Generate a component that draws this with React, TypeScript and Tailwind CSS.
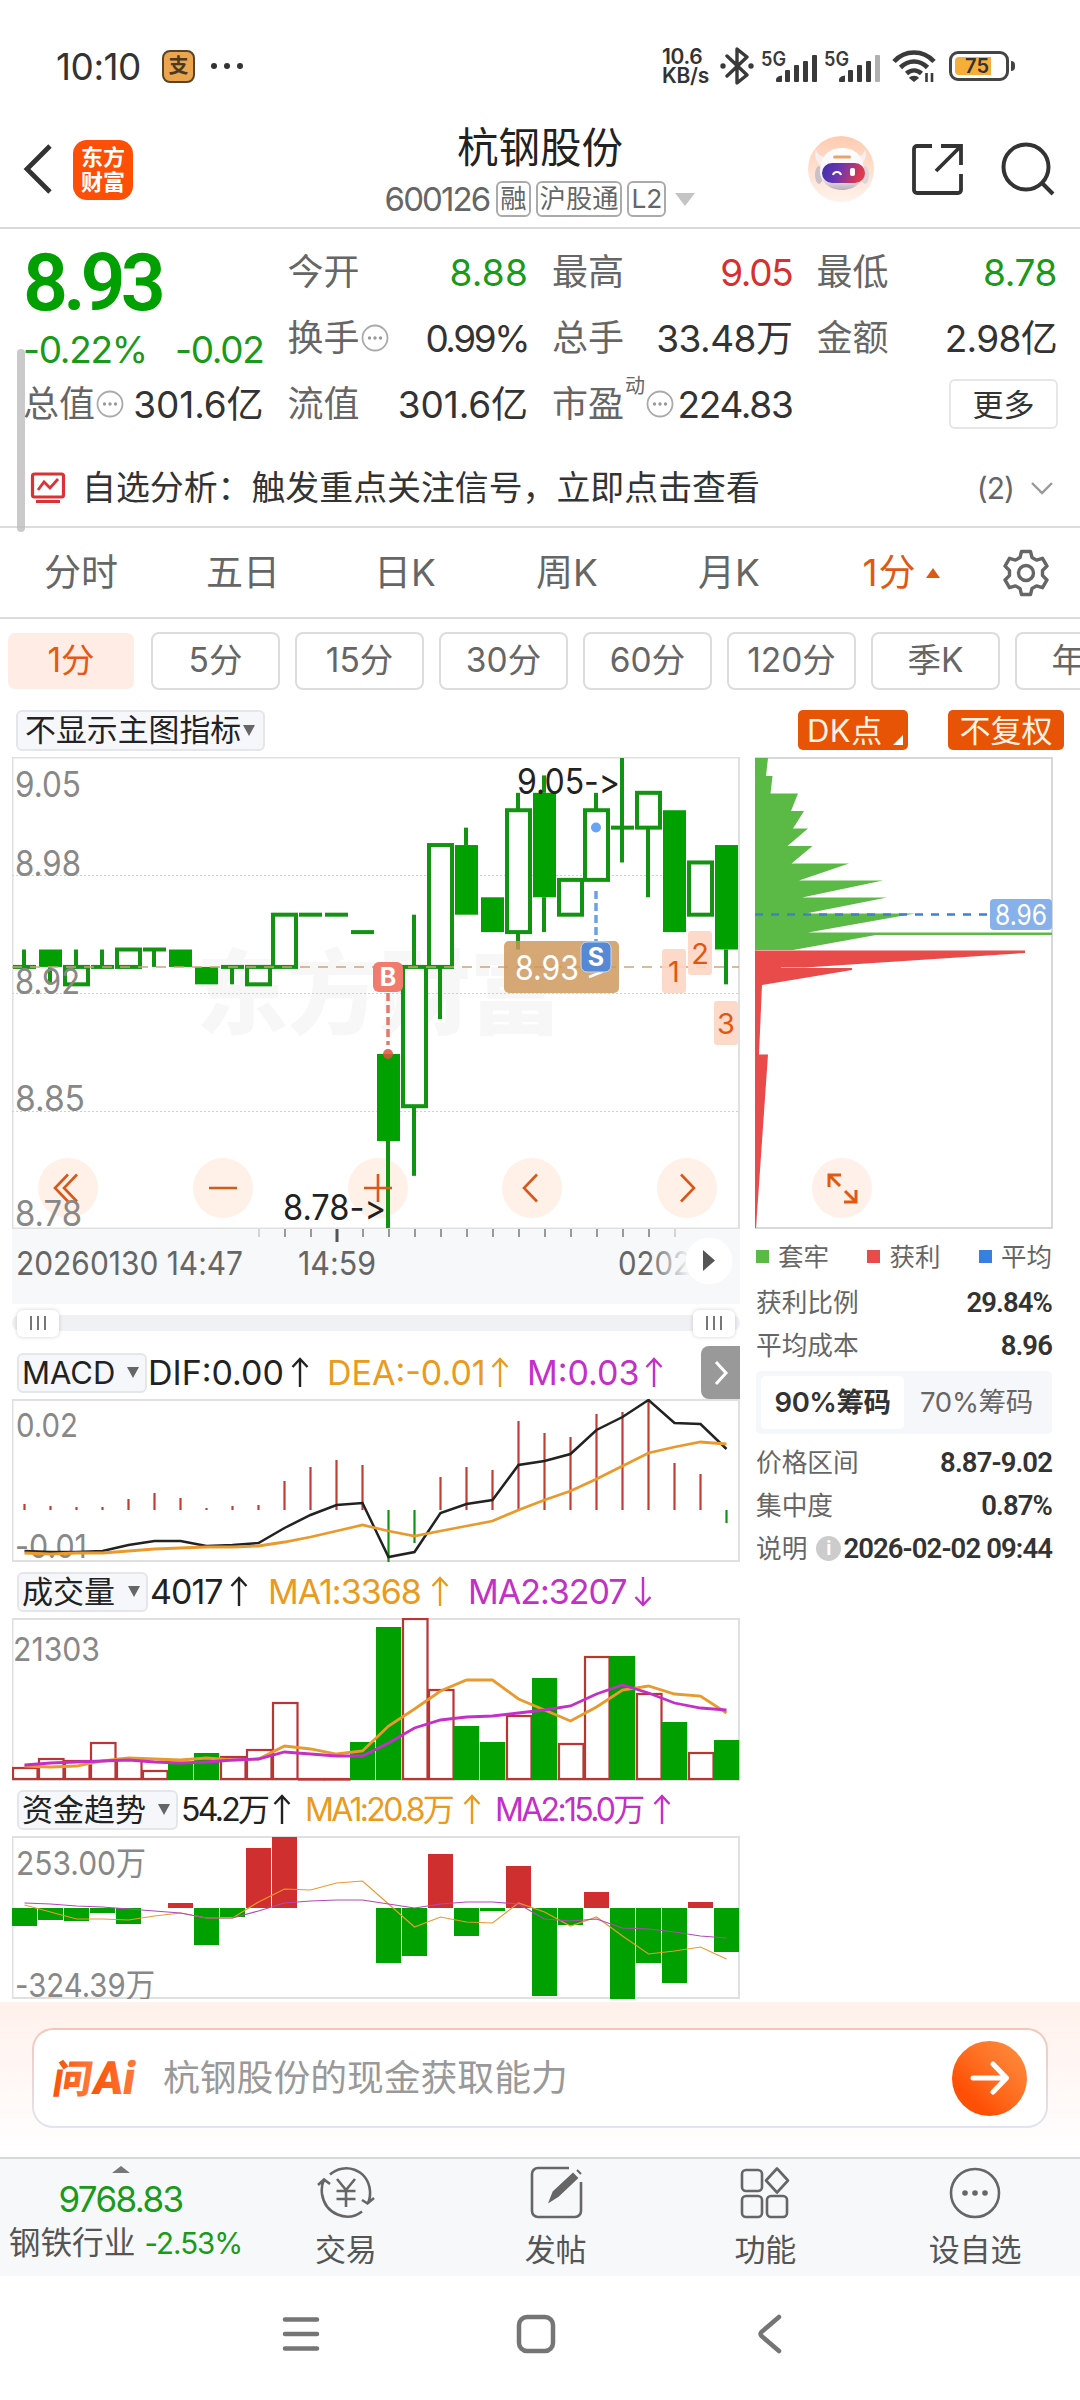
import { type ReactNode } from 'react'

const GREEN = '#00a000'
const RED = '#cf2f2f'
const ORANGE = '#ea9a2c'
const PURPLE = '#c42fc9'

const FONT = "font-['Inter','Noto_Sans_CJK_SC',sans-serif]"

/* ---------- data ---------- */

// [open, close, high, low]
const candles: [number, number, number, number][] = [
  [8.93, 8.93, 8.94, 8.93],
  [8.94, 8.93, 8.94, 8.92],
  [8.92, 8.93, 8.94, 8.92],
  [8.93, 8.93, 8.94, 8.93],
  [8.93, 8.94, 8.94, 8.93],
  [8.94, 8.94, 8.94, 8.93],
  [8.94, 8.93, 8.94, 8.93],
  [8.93, 8.92, 8.93, 8.92],
  [8.93, 8.93, 8.93, 8.92],
  [8.92, 8.93, 8.93, 8.92],
  [8.93, 8.96, 8.96, 8.93],
  [8.96, 8.96, 8.96, 8.96],
  [8.96, 8.96, 8.96, 8.96],
  [8.95, 8.95, 8.95, 8.95],
  [8.88, 8.83, 8.88, 8.78],
  [8.85, 8.93, 8.96, 8.81],
  [8.93, 9.0, 9.0, 8.9],
  [9.0, 8.96, 9.01, 8.96],
  [8.97, 8.95, 8.97, 8.95],
  [8.95, 9.02, 9.03, 8.94],
  [9.03, 8.97, 9.04, 8.95],
  [8.96, 8.98, 8.98, 8.96],
  [8.98, 9.02, 9.03, 8.98],
  [9.01, 9.01, 9.05, 8.99],
  [9.01, 9.03, 9.03, 8.97],
  [9.02, 8.95, 9.02, 8.95],
  [8.96, 8.99, 8.99, 8.96],
  [9.0, 8.94, 9.0, 8.92],
]

const macdBars = [
  6, 4, 3, 3, 11, 17, 12, 2, 4, 5, 29, 43, 50, 45, -52, -33, 33, 43, 40, 89, 77, 73, 96, 98, 109, 47, 36, -13,
]
const dif = [
  151, 152, 152, 151, 145, 141, 141, 146, 145, 143, 128, 115, 105, 103, 157, 152, 113, 104, 100, 65, 61, 54, 30, 17,
  0, 23, 24, 49,
]
const dea = [
  153, 154, 153, 153, 151, 149, 148, 147, 147, 146, 142, 137, 131, 125, 131, 136, 131, 126, 121, 110, 100, 91, 79,
  66, 53, 47, 42, 44,
]

// bar top measured from the top of the pane, negative = falling minute
const volBars = [
  150, 141, 143, 125, 141, 153, -146, -135, 139, 132, 85, 0, 0, -124, -9, 1, 72, -108, -124, 98, -60, 126, 39, -38,
  76, -104, 135, -122,
]
const volMa1 = [
  148, 149, 148, 143, 140, 141, 142, 140, 142, 141, 128, 131, 136, 133, 108, 91, 73, 62, 62, 81, 92, 103, 89, 72,
  68, 76, 78, 95,
]
const volMa2 = [
  147, 145, 144, 143, 142, 144, 145, 144, 142, 141, 134, 136, 138, 138, 125, 110, 102, 99, 98, 95, 92, 88, 76, 67,
  75, 85, 90, 92,
]

const fundBars = [
  -18, -12, -13, -5, -16, 0, 5, -37, -9, 60, 71, 0, 0, 0, -55, -48, 54, -28, -3, 42, -88, -17, 16, -91, -55, -75, 6,
  -44,
]
const fundMa1 = [
  69, 76, 83, 83, 84, 80, 77, 82, 82, 66, 53, 54, 47, 45, 68, 91, 81, 86, 87, 67, 76, 90, 81, 100, 118, 115, 111,
  123,
]
const fundMa2 = [
  67, 68, 70, 71, 73, 75, 77, 82, 82, 75, 67, 65, 64, 64, 68, 72, 68, 66, 66, 68, 83, 85, 83, 92, 93, 96, 100, 102,
]

/* ---------- small helpers ---------- */

const cx = (i: number) => 12.5 + i * 26
const toPoints = (ys: number[]) => ys.map((y, i) => `${cx(i)},${y}`).join(' ')

function More({ className = '' }: { className?: string }) {
  return (
    <svg className={className} width="28" height="28" viewBox="0 0 28 28">
      <circle cx="14" cy="14" r="12.5" fill="none" stroke="#aaa" strokeWidth="1.8" />
      <g fill="#999">
        <circle cx="8.5" cy="14" r="1.7" />
        <circle cx="14" cy="14" r="1.7" />
        <circle cx="19.5" cy="14" r="1.7" />
      </g>
    </svg>
  )
}

function Arrow({ down = false }: { down?: boolean }) {
  return (
    <svg
      className={down ? 'shrink-0 rotate-180' : 'shrink-0'}
      width="18"
      height="31"
      viewBox="0 0 18 31"
      fill="none"
      stroke="currentColor"
      strokeWidth="2.4"
    >
      <path d="M9 30V2M1.500 10L9 2l7.500 8" />
    </svg>
  )
}

type LabelProps = { x: number; y: number; w?: number; size?: number; fill?: string; children: string }

function Label({ x, y, w, size = 35, fill = '#888', children }: LabelProps) {
  return (
    <text
      x={x}
      y={y}
      fontSize={size}
      fill={fill}
      textLength={w}
      lengthAdjust="spacingAndGlyphs"
      className="[font-feature-settings:'calt'_0]"
    >
      {children}
    </text>
  )
}

/* ---------- status bar ---------- */

function Signal({ dim = false }: { dim?: boolean }) {
  return (
    <svg className="overflow-visible" width="60" height="34" viewBox="0 0 60 34" fill="#3a3a3a">
      <text x="0" y="17" fontSize="20" fontWeight="600" textLength="25" lengthAdjust="spacingAndGlyphs">
        5G
      </text>
      <path d="M15 31c0-3 3-4 6-4.500V32a1 1 0 0 1-1 1h-4a1 1 0 0 1-1-1z" />
      <rect x="24" y="21" width="5" height="12" rx="1" />
      <rect x="33" y="16" width="5" height="17" rx="1" />
      <rect x="42" y="12" width="5" height="21" rx="1" />
      <rect x="51" y="6" width="5" height="27" rx="1" fill={dim ? '#b0b0b0' : '#3a3a3a'} />
    </svg>
  )
}

function StatusBar() {
  return (
    <div className="flex h-[132px] items-center pl-[56px] pr-[65px] text-[#333]">
      <span className="w-[87px] text-[37px] leading-none tracking-[-0.500px]">10:10</span>
      <div className="ml-[19px] flex h-[33px] w-[33px] items-center justify-center rounded-[8px] border-2 border-[#5a4326] bg-[#eaa54e] text-[20px] font-bold leading-none text-[#4a3a22]">
        支
      </div>
      <div className="ml-[16px] flex gap-[7px]">
        <i className="h-[6px] w-[6px] rounded-full bg-[#333]" />
        <i className="h-[6px] w-[6px] rounded-full bg-[#333]" />
        <i className="h-[6px] w-[6px] rounded-full bg-[#333]" />
      </div>
      <div className="ml-auto flex items-center">
        <div className="w-[58px] whitespace-nowrap text-[21px] font-semibold leading-[19px] tracking-[-0.300px]">
          <div>10.6</div>
          <div>KB/s</div>
        </div>
        <svg className="mr-[7px]" width="34" height="38" viewBox="0 0 34 38" fill="none" stroke="#3a3a3a" strokeWidth="3.400">
          <path d="M7 9l20 19-10 8V2l10 8L7 29" strokeLinejoin="round" strokeLinecap="round" />
          <circle cx="3" cy="19" r="2.700" fill="#3a3a3a" stroke="none" />
          <circle cx="31" cy="19" r="2.700" fill="#3a3a3a" stroke="none" />
        </svg>
        <Signal />
        <span className="w-[3px]" />
        <Signal dim />
        <svg className="ml-[8px]" width="44" height="36" viewBox="0 0 44 36" fill="none" stroke="#3a3a3a" strokeWidth="4.600">
          <path d="M2 13.500C13 1.500 31 1.500 42 13.500" />
          <path d="M8.500 19.500c8-8 19-8 27 0" />
          <path d="M14.500 25.500c4.500-4 10.500-4 15 0" />
          <path d="M17 30c2-3 8-3 10 0L22 34z" fill="#3a3a3a" stroke="none" />
          <path d="M34.500 34v-9M40 25v9" strokeWidth="2.600" />
        </svg>
        <div className="ml-[13px] flex h-[30px] w-[60px] items-center rounded-[9px] border-[3.500px] border-[#444] p-[3px]">
          <div className="flex h-full w-[36px] items-center justify-center rounded-l-[4px] bg-[#f5ae38] pl-[8px] text-[20px] font-semibold leading-none">
            75
          </div>
        </div>
        <i className="ml-[2px] h-[10px] w-[4px] rounded-r bg-[#444]" />
      </div>
    </div>
  )
}

/* ---------- header ---------- */

function Robot() {
  return (
    <svg width="66" height="66" viewBox="0 0 66 66">
      <defs>
        <linearGradient id="halo" x1="0" y1="0" x2="0" y2="1">
          <stop offset="0" stopColor="#ffcbb0" />
          <stop offset="1" stopColor="#fff3ed" />
        </linearGradient>
        <linearGradient id="shell" x1="0" y1="0" x2="0" y2="1">
          <stop offset="0" stopColor="#fff" />
          <stop offset="0.700" stopColor="#f3f0f4" />
          <stop offset="1" stopColor="#b9aeb6" />
        </linearGradient>
        <linearGradient id="visor" x1="0" y1="0" x2="1" y2="0.200">
          <stop offset="0" stopColor="#3a2fa6" />
          <stop offset="0.450" stopColor="#6a35b4" />
          <stop offset="1" stopColor="#e23a48" />
        </linearGradient>
      </defs>
      <circle cx="33" cy="33" r="33" fill="url(#halo)" />
      <path d="M8 13c1 6 5 8 10 8l-6 8c-5-5-6-11-4-16zM57 13c-1 6-5 8-10 8l6 8c5-5 6-11 4-16z" fill="#f6eff0" />
      <ellipse cx="11" cy="39" rx="4" ry="9" fill="#c9c0c8" />
      <ellipse cx="57" cy="39" rx="4" ry="9" fill="#ddd5da" />
      <path d="M12 36c0-16 9-24 22-24s22 8 22 24c0 9-9 18-22 18S12 45 12 36z" fill="url(#shell)" />
      <rect x="25" y="19.500" width="18" height="3" rx="1.500" fill="#e8a36c" />
      <rect x="14" y="27" width="43" height="20" rx="10" fill="url(#visor)" />
      <path d="M25 39c1-4 7-4 8 0" fill="none" stroke="#fff" strokeWidth="2" />
      <rect x="42" y="32" width="5" height="8" rx="2" fill="#fff" />
    </svg>
  )
}

function Tag({ children }: { children: ReactNode }) {
  return (
    <span className="flex h-[36px] items-center rounded-[6px] border-2 border-[#aaa] px-[2px] text-[26.300px] leading-none">
      {children}
    </span>
  )
}

function Header() {
  return (
    <div className="flex h-[97px] items-start border-b-2 border-[#d8d8d8] pl-[22px] pr-[25px]">
      <svg className="mt-[11px]" width="32" height="52" viewBox="0 0 32 52" fill="none" stroke="#333" strokeWidth="4.800">
        <path d="M28 3L5 26l23 23" />
      </svg>
      <div className="ml-[19px] mt-[8px] flex h-[60px] w-[60px] flex-col items-center justify-center rounded-[14px] bg-[#fd4f05] text-[22px] font-bold leading-[25px] text-white">
        <div>东方</div>
        <div>财富</div>
      </div>
      <div className="ml-[200px] flex w-[414px] flex-col items-center text-[#666]">
        <div className="-mt-[5px] text-[41.500px] leading-[42px] text-[#222]">杭钢股份</div>
        <div className="mt-[12px] flex items-center gap-[5px]">
          <span className="mr-[2px] text-[33px] leading-none tracking-[-1.900px]">600126</span>
          <Tag>融</Tag>
          <Tag>沪股通</Tag>
          <Tag>L2</Tag>
          <i className="ml-[4px] border-x-[10px] border-t-[13px] border-x-transparent border-t-[#c4c4c4]" />
        </div>
      </div>
      <div className="ml-auto mt-[4px] flex items-center">
        <Robot />
        <svg className="ml-[37px]" width="52" height="52" viewBox="0 0 52 52" fill="none" stroke="#333" strokeWidth="3.800">
          <path d="M21 3H6a3 3 0 0 0-3 3v41a3 3 0 0 0 3 3h41a3 3 0 0 0 3-3V31M30 3h20v19M50 3L25 28" />
        </svg>
        <svg className="ml-[38px]" width="54" height="54" viewBox="0 0 54 54" fill="none" stroke="#333" strokeWidth="4">
          <circle cx="25" cy="25" r="22.500" />
          <path d="M41 41l11 11" />
        </svg>
      </div>
    </div>
  )
}

/* ---------- quote ---------- */

type CellProps = { name: string; value: string; tone?: string; track?: string; more?: boolean; sup?: string }

function Cell({ name, value, tone = 'text-[#333]', track = 'tracking-[-1.300px]', more, sup }: CellProps) {
  return (
    <div className="flex h-[66px] items-center">
      <span className="text-[36px] text-[#666]">{name}</span>
      {sup && <sup className="top-0 -mt-[36px] ml-[1px] text-[20px] text-[#666]">{sup}</sup>}
      {more && <More className="ml-[1px] shrink-0" />}
      <span className={`ml-auto whitespace-nowrap text-[37px] ${track} ${tone}`}>{value}</span>
    </div>
  )
}

function Quote() {
  return (
    <div className="relative h-[299px] border-b-2 border-[#dcdcdc] pt-[10px]">
      <div className="absolute left-[17px] top-[120px] z-10 h-[183px] w-[8px] rounded-full bg-[#bdbdbd]/80" />
      <div className="grid grid-cols-4 gap-x-6 px-[23px] leading-none">
        <div className="row-span-2 text-[#1a9a1a]">
          <div className="pt-[4px] font-['Roboto'] text-[79px] font-semibold leading-[80px] tracking-[-5px] text-[#00a000]">
            8.93
          </div>
          <div className="mt-[8px] flex justify-between text-[37px] tracking-[-1.300px]">
            <span>-0.22%</span>
            <span>-0.02</span>
          </div>
        </div>
        <Cell name="今开" value="8.88" tone="text-[#1a9a1a]" track="tracking-[0.200px]" />
        <Cell name="最高" value="9.05" tone="text-[#d83030]" />
        <Cell name="最低" value="8.78" tone="text-[#1a9a1a]" track="tracking-[-0.400px]" />
        <Cell name="换手" value="0.99%" more track="tracking-[-2.500px]" />
        <Cell name="总手" value="33.48万" track="tracking-[-0.500px]" />
        <Cell name="金额" value="2.98亿" track="tracking-[-0.700px]" />
        <Cell name="总值" value="301.6亿" more track="tracking-[-0.100px]" />
        <Cell name="流值" value="301.6亿" track="tracking-[-0.100px]" />
        <Cell name="市盈" value="224.83" more sup="动" />
        <div className="-mr-[1px] flex h-[66px] items-center justify-end">
          <div className="flex h-[50px] w-[109px] items-center justify-center rounded-[6px] border-2 border-[#e6e6e6] text-[31px] text-[#333]">
            更多
          </div>
        </div>
      </div>
      <div className="flex h-[90px] items-center pl-[30px] pr-[26px] pt-[11px] leading-none">
        <svg width="37" height="32" viewBox="0 0 37 32" fill="none" stroke="#dc3237" strokeWidth="3.200">
          <rect x="2.500" y="2" width="31" height="23" rx="2" />
          <path d="M8 18l6-8 6 6 8-9" strokeWidth="2.800" />
          <path d="M6 29.500h24" strokeWidth="3" />
        </svg>
        <span className="ml-[15px] text-[33.900px] text-[#333]">自选分析：触发重点关注信号，立即点击查看</span>
        <span className="ml-auto text-[30px] tracking-[-1px] text-[#666]">(2)</span>
        <svg className="ml-[16px]" width="24" height="14" viewBox="0 0 24 14" fill="none" stroke="#999" strokeWidth="2.400">
          <path d="M2 2l10 10L22 2" />
        </svg>
      </div>
    </div>
  )
}

/* ---------- tabs ---------- */

function Tabs() {
  return (
    <div className="flex h-[91px] items-center border-b-2 border-[#dcdcdc] text-[37px] leading-none text-[#666]">
      {['分时', '五日', '日K', '周K', '月K'].map((t) => (
        <div key={t} className="w-[162px] text-center">
          {t}
        </div>
      ))}
      <div className="flex w-[162px] items-center justify-center gap-[9px] pl-[20px] text-[#de5a14]">
        <span className="tracking-[1px]">1分</span>
        <i className="border-x-[7px] border-b-[10px] border-x-transparent border-b-[#de5a14]" />
      </div>
      <svg className="ml-[30px]" width="48" height="48" viewBox="0 0 48 48" fill="none" stroke="#666" strokeWidth="3.400" strokeLinejoin="round">
        <path d="M19.500 2.500h9l1.500 6 4.500 2.600 6-1.800 4.500 7.800-4.500 4.300v5.200l4.500 4.300-4.500 7.800-6-1.800-4.500 2.600-1.500 6h-9l-1.500-6-4.500-2.600-6 1.800L3 30.900l4.500-4.300v-5.200L3 17.100l4.500-7.800 6 1.800L18 8.500z" />
        <circle cx="24" cy="24" r="7.500" />
      </svg>
    </div>
  )
}

function Periods() {
  return (
    <div className="flex h-[78px] items-center overflow-hidden pl-[8px] pt-[6px] text-[33.500px] leading-none text-[#666]">
      <div className="mr-[17px] flex h-[56px] w-[126px] shrink-0 items-center justify-center rounded-[7px] bg-[#ffece4] text-[#e25a14]">
        1分
      </div>
      {['5分', '15分', '30分', '60分', '120分', '季K', '年K'].map((t) => (
        <div
          key={t}
          className="mr-[15px] flex h-[58px] w-[129px] shrink-0 items-center justify-center rounded-[8px] border-2 border-[#dcdcdc]"
        >
          {t}
        </div>
      ))}
    </div>
  )
}

function ChartTools() {
  return (
    <div className="flex h-[60px] items-center pl-[16px] pr-[16px] pt-[6px] leading-none">
      <div className="flex h-[41px] w-[249px] items-center rounded-[6px] border-2 border-[#e4e6ea] bg-[#f6f7fa] pl-[7px] text-[30.900px] text-[#222]">
        不显示主图指标
        <i className="ml-[2px] border-x-[6px] border-t-[11px] border-x-transparent border-t-[#666]" />
      </div>
      <div className="relative ml-auto flex h-[40px] w-[110px] items-center rounded-[5px] bg-[#e85405] pl-[9px] text-[31px] tracking-[0.500px] text-[#fff3e4]">
        DK点
        <i className="absolute bottom-[5px] right-[5px] border-b-[10px] border-l-[10px] border-b-white border-l-transparent" />
      </div>
      <div className="ml-[40px] flex h-[40px] w-[116px] items-center justify-center rounded-[5px] bg-[#e85405] text-[31px] text-[#fff3e4]">
        不复权
      </div>
    </div>
  )
}

/* ---------- candle chart ---------- */

const py = (p: number) => 1 + (9.05 - p) * 1741

function CandleChart() {
  return (
    <svg className="block" width="728" height="472" viewBox="0 0 728 472">
      <rect x="0.500" y="0.500" width="726.500" height="471" fill="#fff" stroke="#e0e0e0" strokeWidth="2" />
      <g className="font-['Noto_Sans_CJK_SC']" fontWeight="900" fill="#f7f7f7">
        <text x="184" y="270" fontSize="92" textLength="366">
          东方财富
        </text>
      </g>
      <g stroke="#d0d0d0" strokeDasharray="2 2">
        <path d="M0 118.500H727M0 236.500H727M0 354.500H727" />
      </g>
      {candles.map(([o, c, h, l], i) => {
        const x = 12 + i * 26
        const top = py(Math.max(o, c))
        const bottom = py(Math.min(o, c))
        return (
          <g key={i} stroke="#129312" strokeWidth="4">
            {h > Math.max(o, c) && <path d={`M${x} ${py(h)}V${top}`} />}
            {l < Math.min(o, c) && <path d={`M${x} ${bottom}V${py(l)}`} />}
            {o === c && <path d={`M${x - 11} ${top}h23`} />}
            {c > o && <rect x={x - 11} y={top} width="23" height={bottom - top} fill="#fff" />}
            {c < o && <rect x={x - 11} y={top} width="23" height={bottom - top} fill={GREEN} stroke="none" />}
          </g>
        )
      })}
      <path d="M0 210H727" stroke="#d0a47a" strokeWidth="1.500" strokeDasharray="10 8" />

      {/* zoom / pan buttons */}
      <g fill="#ffe4d6" fillOpacity="0.550">
        {[56, 211, 366, 520, 675].map((x) => (
          <circle key={x} cx={x} cy="431" r="30" />
        ))}
      </g>
      <path d="M376 384.500V471" stroke="#129312" strokeWidth="4" />
      <g fill="none" stroke="#d8581a" strokeWidth="2.600">
        <path d="M56 417.500L43 431l13 13.500M65 417.500L52 431l13 13.500" />
        <path d="M197 431h28M352 431h28M366 417v28" />
        <path d="M525 417.500L512 431l13 13.500M669 417.500L682 431l-13 13.500" />
      </g>

      <Label x={3} y={39.500} w={66}>9.05</Label>
      <Label x={3} y={119} w={66}>8.98</Label>
      <Label x={3} y={237} w={65}>8.92</Label>
      <Label x={3} y={354} w={70}>8.85</Label>
      <Label x={3} y={469} w={67}>8.78</Label>
      <Label x={505} y={37} w={103} fill="#222">9.05-&gt;</Label>
      <Label x={271} y={463} w={103} fill="#222">8.78-&gt;</Label>

      {/* buy marker */}
      <path d="M376 236v52" stroke="#e5786c" strokeWidth="3.500" strokeDasharray="8 4" />
      <circle cx="376" cy="297" r="5" fill="#e0503c" fillOpacity="0.850" />
      <rect x="361" y="205" width="30" height="30" rx="6" fill="#f37b6e" />
      <text x="376" y="229" fontSize="25" fontWeight="700" fill="#fff" textAnchor="middle">
        B
      </text>

      {/* last price + sell marker */}
      <rect x="492" y="184" width="115" height="52" rx="5" fill="#cd9558" fillOpacity="0.820" />
      <Label x={503} y={223} w={64} size={34} fill="#fff">8.93</Label>
      <path d="M577 220l13-5v-3" fill="none" stroke="#fff" strokeWidth="2.500" />
      <circle cx="584" cy="70.500" r="5" fill="#6aa2f5" />
      <path d="M584 134v50" stroke="#6aa2ea" strokeWidth="3.500" strokeDasharray="8 4" />
      <rect x="569" y="185" width="30" height="30" rx="6" fill="#5589d6" stroke="#c8d8f0" />
      <text x="584" y="209" fontSize="25" fontWeight="700" fill="#fff" textAnchor="middle">
        S
      </text>

      {[
        [650, 192, '1'],
        [676, 174, '2'],
        [702, 244, '3'],
      ].map(([x, y, t]) => (
        <g key={t}>
          <rect x={x} y={y} width="24" height="44" rx="3" fill="#fdd5c4" fillOpacity="0.900" />
          <text x={Number(x) + 12} y={Number(y) + 33} fontSize="29" fill="#e2560f" textAnchor="middle">
            {t}
          </text>
        </g>
      ))}
    </svg>
  )
}

function TimeAxis() {
  return (
    <svg className="block" width="728" height="75" viewBox="0 0 728 75">
      <defs>
        <linearGradient id="fade">
          <stop offset="0" stopColor="#f7f8fa" stopOpacity="0" />
          <stop offset="1" stopColor="#f7f8fa" />
        </linearGradient>
      </defs>
      <rect width="728" height="75" fill="#f7f8fa" />
      <g stroke="#999" strokeWidth="2">
        {Array.from({ length: 17 }, (_, i) => (
          <path
            key={i}
            d={`M${247 + i * 26} 0v${i === 3 ? 13 : 8}`}
            stroke={i === 3 ? '#555' : i === 0 || i === 16 ? '#d5d5d5' : '#999'}
            strokeWidth={i === 3 ? 3 : 2}
          />
        ))}
      </g>
      <Label x={4} y={46} w={227} size={33} fill="#666">20260130 14:47</Label>
      <Label x={286} y={46} w={78} size={33} fill="#666">14:59</Label>
      <Label x={606} y={46} w={73} size={33} fill="#666">0202</Label>
      <rect x="636" y="15" width="42" height="40" fill="url(#fade)" />
      <circle cx="697" cy="32" r="23.500" fill="#fff" />
      <path d="M691 21l12 10.500-12 10.500z" fill="#555" />
    </svg>
  )
}

function Handle() {
  return (
    <div className="flex h-[27px] w-[42px] items-center justify-center gap-[5px] rounded-[6px] bg-white shadow-[0_0_4px_rgba(0,0,0,0.18)]">
      <i className="h-[14px] w-[2px] bg-[#777]" />
      <i className="h-[14px] w-[2px] bg-[#777]" />
      <i className="h-[14px] w-[2px] bg-[#777]" />
    </div>
  )
}

function RangeSlider() {
  return (
    <div className="h-[42px] pt-[11px]">
      <div className="flex h-[16px] w-[728px] items-center justify-between rounded-full bg-[#f0f1f4] px-[5px]">
        <Handle />
        <Handle />
      </div>
    </div>
  )
}

/* ---------- indicator panes ---------- */

type Reading = { text: string; color: string; width: string; down?: boolean; gap?: string }
type IndicatorBarProps = { name: string; chip: string; readings: Reading[]; font: string; children?: ReactNode }

function IndicatorBar({ name, chip, readings, font, children }: IndicatorBarProps) {
  return (
    <div className="relative flex h-[53px] items-center pl-[5px] leading-none">
      <div
        className={`flex h-[40px] items-center justify-between rounded-[6px] border-2 border-[#e4e6ea] bg-[#f6f7fa] pl-[3px] pr-[6px] text-[31px] text-[#222] ${chip}`}
      >
        {name}
        <i className="border-x-[6.500px] border-t-[11px] border-x-transparent border-t-[#666]" />
      </div>
      {readings.map((r) => (
        <div
          key={r.text}
          className={`flex shrink-0 items-center justify-between whitespace-nowrap ${r.color} ${r.width} ${r.gap ?? 'ml-[18px]'}`}
        >
          <span className={font}>{r.text}</span>
          <Arrow down={r.down} />
        </div>
      ))}
      {children}
    </div>
  )
}

function Pane({ children }: { children: ReactNode }) {
  return (
    <svg className="block" width="728" height="163" viewBox="0 0 728 163">
      <rect x="0.500" y="1" width="726.500" height="161" fill="#fff" stroke="#e0e0e0" strokeWidth="2" />
      {children}
    </svg>
  )
}

function Macd() {
  return (
    <Pane>
      <Label x={4} y={38} w={62} size={33}>0.02</Label>
      <Label x={3} y={159} w={72} size={33}>-0.01</Label>
      {macdBars.map((v, i) => (
        <path key={i} d={`M${cx(i)} 111v${-v}`} stroke={v > 0 ? '#c23c38' : '#129312'} strokeWidth="2.200" />
      ))}
      <polyline points={toPoints(dif.map((v) => v + 1))} fill="none" stroke="#222" strokeWidth="2.500" />
      <polyline points={toPoints(dea.map((v) => v + 1))} fill="none" stroke={ORANGE} strokeWidth="2.800" />
    </Pane>
  )
}

function Volume() {
  return (
    <Pane>
      <Label x={1} y={43} w={87} size={33}>21303</Label>
      {volBars.map((v, i) =>
        v < 0 ? (
          <rect key={i} x={i * 26} y={-v} width="25.200" height={162 + v} fill={GREEN} />
        ) : (
          <rect
            key={i}
            x={i * 26 + 1}
            y={v === 0 ? 161 : v}
            width="24.500"
            height={v === 0 ? 0.5 : 161 - v}
            fill="none"
            stroke="#b93632"
            strokeWidth="2.200"
          />
        ),
      )}
      <polyline points={toPoints(volMa1)} fill="none" stroke={ORANGE} strokeWidth="2.800" />
      <polyline points={toPoints(volMa2)} fill="none" stroke={PURPLE} strokeWidth="2.800" />
    </Pane>
  )
}

function FundTrend() {
  return (
    <Pane>
      <Label x={4} y={39} w={130} size={33}>253.00万</Label>
      <Label x={3} y={161} w={140} size={33}>-324.39万</Label>
      {fundBars.map((v, i) => (
        <rect key={i} x={i * 26} y={v > 0 ? 72 - v : 72} width="25" height={Math.abs(v)} fill={v > 0 ? RED : GREEN} />
      ))}
      <polyline points={toPoints(fundMa1)} fill="none" stroke={ORANGE} strokeWidth="1.200" />
      <polyline points={toPoints(fundMa2)} fill="none" stroke="#b04ab8" strokeWidth="1.200" />
    </Pane>
  )
}

/* ---------- chip distribution ---------- */

function ChipChart() {
  return (
    <svg className="block" width="298" height="472" viewBox="0 0 298 472">
      <rect x="0.500" y="1" width="296.500" height="470" fill="#fff" stroke="#ccc" strokeWidth="1.500" />
      <path
        d="M0 1H13L11 19H17.500L15.500 36.500H43L36 54H49L38 71.500H53L32.500 89H57.500L36.500 106.500H94L44 123.500H128L47 140.500H132L51 156.500H160L53 175.500H297V178H121L38 193H0z"
        fill="#5bb945"
      />
      <path d="M0 193.500H270V196L50 210.500H26V211H97V213L7 228L4 297.500H13L1 471H0z" fill="#e94a4a" />
      <path d="M0 157.500H232" stroke="#3f80cc" strokeWidth="2.500" strokeDasharray="8 8" />
      <rect x="235" y="142" width="62" height="31" rx="4" fill="#86b1ea" />
      <Label x={240} y={168} w={52} size={28} fill="#fff">8.96</Label>
      <circle cx="87" cy="431" r="30" fill="#fff1ea" />
      <g fill="none" stroke="#e05a12" strokeWidth="3">
        <path d="M74 430v-12h12M74 418l11 11M101 433v12H89M101 445L90 434" />
      </g>
    </svg>
  )
}

function Row({ name, value }: { name: ReactNode; value: string }) {
  return (
    <div className="flex h-[43px] items-center justify-between whitespace-nowrap text-[25.700px] text-[#666]">
      <span className="flex items-center">{name}</span>
      <b className="font-['Roboto'] text-[27.500px] font-semibold tracking-[-0.900px] text-[#333]">{value}</b>
    </div>
  )
}

function ChipPanel() {
  const legend = [
    { name: '套牢', color: 'bg-[#5bb945]' },
    { name: '获利', color: 'bg-[#e94a4a]' },
    { name: '平均', color: 'bg-[#3780e2]' },
  ]
  return (
    <div className="w-[298px]">
      <ChipChart />
      <div className="px-[1px] leading-none">
        <div className="flex h-[52px] items-center justify-between pt-[3px] text-[25.500px] text-[#666]">
          {legend.map((l) => (
            <div key={l.name} className="flex items-center gap-[9px]">
              <i className={`h-[13px] w-[13px] ${l.color}`} />
              {l.name}
            </div>
          ))}
        </div>
        <Row name="获利比例" value="29.84%" />
        <Row name="平均成本" value="8.96" />
        <div className="mb-[7px] mt-[4px] flex h-[63px] items-center rounded-[5px] bg-[#f6f7fa] px-[5px] text-[27.500px] tracking-[-0.300px] text-[#666]">
          <div className="flex h-[53px] w-[143px] items-center justify-center rounded-[5px] bg-white font-semibold tracking-[-0.500px] text-[#333]">
            90%筹码
          </div>
          <div className="flex-1 pl-[2px] text-center">70%筹码</div>
        </div>
        <Row name="价格区间" value="8.87-9.02" />
        <Row name="集中度" value="0.87%" />
        <Row
          name={
            <>
              说明
              <i className="ml-[9px] flex h-[25px] w-[25px] items-center justify-center rounded-full bg-[#ccc] text-[19px] font-bold not-italic text-white">
                i
              </i>
            </>
          }
          value="2026-02-02 09:44"
        />
      </div>
    </div>
  )
}

/* ---------- bottom ---------- */

function AskBar() {
  return (
    <div className="h-[155px] bg-gradient-to-b from-[#fff1ec] to-white px-[32px] pt-[26px]">
      <div className="h-[100px] rounded-[21px] bg-gradient-to-b from-[#f6c5ba] to-[#dfe5f1] p-[2px]">
        <div className="flex h-full items-center rounded-[19px] bg-white pl-[17px] pr-[19px] leading-none">
          <svg width="90" height="42" viewBox="0 0 90 42">
            <defs>
              <linearGradient id="ask" x1="0" x2="1" y1="0" y2="0">
                <stop offset="0" stopColor="#f9530a" />
                <stop offset="1" stopColor="#ff7a3c" />
              </linearGradient>
            </defs>
            <g transform="skewX(-9)" fill="url(#ask)" fontWeight="900">
              <text x="6" y="36" fontSize="39" textLength="38" className="font-['Noto_Sans_CJK_SC']">
                问
              </text>
              <text x="46" y="37" fontSize="46" textLength="42" lengthAdjust="spacingAndGlyphs" className="font-['Roboto']">
                Ai
              </text>
            </g>
          </svg>
          <span className="ml-[22px] text-[36.800px] text-[#999]">杭钢股份的现金获取能力</span>
          <div className="ml-auto flex h-[75px] w-[75px] items-center justify-center rounded-full bg-gradient-to-bl from-[#ff9040] via-[#ff6a1c] to-[#fd4f05] to-75%">
            <svg width="40" height="34" viewBox="0 0 40 34" fill="none" stroke="#fff" strokeWidth="5" strokeLinecap="round" strokeLinejoin="round">
              <path d="M3 17h33M23 3l13.500 14L23 31" />
            </svg>
          </div>
        </div>
      </div>
    </div>
  )
}

function NavItem({ name, children }: { name: string; children: ReactNode }) {
  return (
    <div className="flex w-[210px] flex-col items-center pt-[6px] text-[31px] text-[#555]">
      <svg width="58" height="54" viewBox="0 0 58 54" fill="none" stroke="#666" strokeWidth="2.600">
        {children}
      </svg>
      <span className="mt-[15px]">{name}</span>
    </div>
  )
}

function BottomNav() {
  return (
    <div className="flex h-[119px] border-t-2 border-[#d5d8dc] bg-[#f7f8fa] leading-none">
      <div className="flex w-[241px] flex-col items-center pt-[7px]">
        <i className="border-x-[9px] border-b-[7px] border-x-transparent border-b-[#777]" />
        <span className="mt-[9px] text-[35px] tracking-[-1.600px] text-[#1a9a1a]">9768.83</span>
        <div className="mt-[10px] flex items-baseline whitespace-nowrap pl-[10px] text-[31.700px] text-[#555]">
          钢铁行业
          <span className="ml-[9px] text-[29.500px] tracking-[-1px] text-[#1a9a1a]">-2.53%</span>
        </div>
      </div>
      <NavItem name="交易">
        <path d="M13 9.500C27-3 51 4 53 26c.3 5-.5 9-2 12M57 33l-6.500 5.500L45 35" />
        <path d="M45 46.500C30 58 8 49 5 29c-.7-6 .3-11 2-14M1 20l6-5.500L13 19" />
        <path d="M20 14l9 11 9-11M29 25v17M19.500 26h19M19.500 34h19" />
      </NavItem>
      <NavItem name="发帖">
        <path d="M42 3H11a6 6 0 0 0-6 6v37a6 6 0 0 0 6 6h37a6 6 0 0 0 6-6V17" />
        <path d="M23 36l3.500-9L46 9l4 4-19 18zM50 5l4 4" fill="#666" strokeWidth="2" />
      </NavItem>
      <NavItem name="功能">
        <rect x="6" y="5" width="20" height="21" rx="4" />
        <rect x="6" y="31" width="20" height="21" rx="4" />
        <rect x="31" y="31" width="20" height="21" rx="4" />
        <path d="M41 3.500L52 15.500 41 27.500 30 15.500z" strokeLinejoin="round" />
      </NavItem>
      <NavItem name="设自选">
        <circle cx="29" cy="28" r="24" />
        <g fill="#666" stroke="none">
          <circle cx="19" cy="28" r="2.800" />
          <circle cx="29" cy="28" r="2.800" />
          <circle cx="39" cy="28" r="2.800" />
        </g>
      </NavItem>
    </div>
  )
}

function SystemNav() {
  return (
    <div className="flex h-[115px] items-center bg-white pl-[281px]">
      <svg width="40" height="40" viewBox="0 0 40 40" stroke="#757575" strokeWidth="4.500" strokeLinecap="round">
        <path d="M4 5.500h32M4 20h32M4 34.500h32" />
      </svg>
      <svg className="ml-[195px]" width="40" height="40" viewBox="0 0 40 40" fill="none" stroke="#757575" strokeWidth="4.500">
        <rect x="3" y="3" width="34" height="34" rx="8" />
      </svg>
      <svg className="ml-[198px]" width="30" height="40" viewBox="0 0 30 40" fill="none" stroke="#757575" strokeWidth="4.500" strokeLinecap="round" strokeLinejoin="round">
        <path d="M25 3L7.500 18a2.500 2.500 0 0 0 0 4L25 37" />
      </svg>
    </div>
  )
}

export default function App() {
  return (
    <div className={`h-[2400px] w-[1080px] overflow-hidden bg-white ${FONT}`}>
      <StatusBar />
      <Header />
      <Quote />
      <Tabs />
      <Periods />
      <ChartTools />
      <div className="flex h-[1245px] gap-[15px] pl-[12px]">
        <div className="w-[728px]">
          <CandleChart />
          <TimeAxis />
          <RangeSlider />
          <IndicatorBar
            name="MACD"
            chip="w-[130px]"
            font="text-[34px]"
            readings={[
              { text: 'DIF:0.00', color: 'text-[#222]', width: 'w-[161px]', gap: 'ml-[1px]' },
              { text: 'DEA:-0.01', color: 'text-[#ea9a1c]', width: 'w-[182px]' },
              { text: 'M:0.03', color: 'text-[#c42fc9]', width: 'w-[136px]' },
            ]}
          >
            <div className="absolute right-0 top-0 flex h-[53px] w-[39px] items-center justify-center rounded-l-[8px] bg-[#999]">
              <svg width="16" height="26" viewBox="0 0 16 26" fill="none" stroke="#fff" strokeWidth="3">
                <path d="M3 2l10 11L3 24" />
              </svg>
            </div>
          </IndicatorBar>
          <Macd />
          <div className="h-[3px]" />
          <IndicatorBar
            name="成交量"
            chip="w-[131px]"
            font="text-[34px] tracking-[-1px]"
            readings={[
              { text: '4017', color: 'text-[#222]', width: 'w-[98px]', gap: 'ml-[2px]' },
              { text: 'MA1:3368', color: 'text-[#ea9a1c]', width: 'w-[181px]', gap: 'ml-[20px]' },
              { text: 'MA2:3207', color: 'text-[#c42fc9]', width: 'w-[184px]', gap: 'ml-[19px]', down: true },
            ]}
          />
          <Volume />
          <div className="h-[2px]" />
          <IndicatorBar
            name="资金趋势"
            chip="w-[161px]"
            font="text-[32px] tracking-[-2.700px]"
            readings={[
              { text: '54.2万', color: 'text-[#222]', width: 'w-[110px]', gap: 'ml-[3px]' },
              { text: 'MA1:20.8万', color: 'text-[#ea9a1c]', width: 'w-[176px]', gap: 'ml-[14px]' },
              { text: 'MA2:15.0万', color: 'text-[#c42fc9]', width: 'w-[176px]', gap: 'ml-[14px]' },
            ]}
          />
          <FundTrend />
        </div>
        <ChipPanel />
      </div>
      <AskBar />
      <BottomNav />
      <SystemNav />
    </div>
  )
}
